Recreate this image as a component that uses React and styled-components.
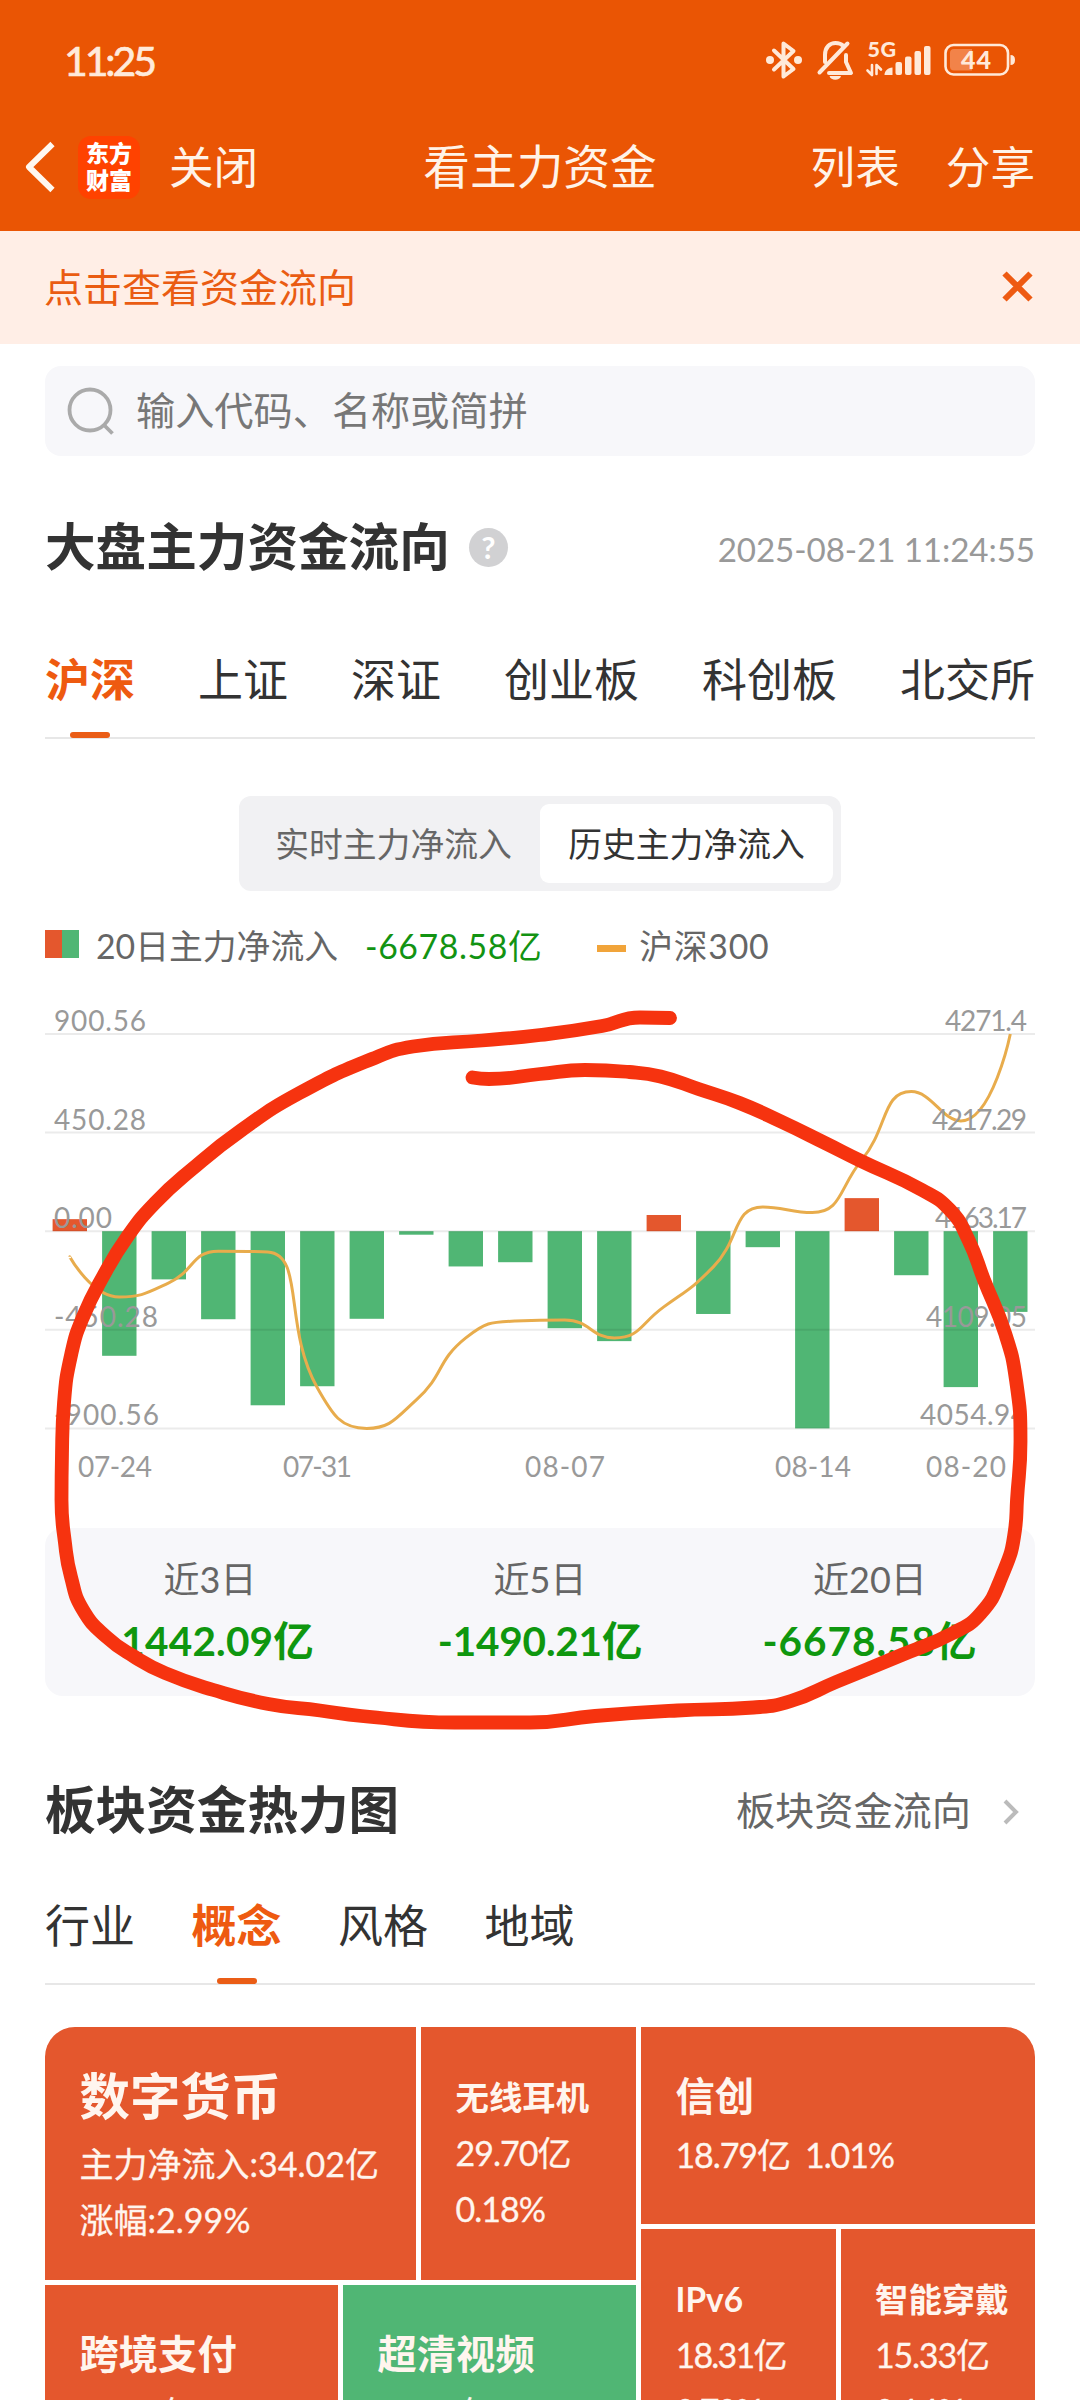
import React from "react";
import styled, { createGlobalStyle, css } from "styled-components";

const GlobalStyle = createGlobalStyle`
    *, *::before, *::after {
        box-sizing: border-box;
    }

    body {
        margin: 0;
        background: #fff;
        font-family: Lato, "Noto Sans CJK SC", sans-serif;
        color: #333;
    }
`;

const Page = styled.div`
    position: relative;
    width: 1080px;
    height: 2400px;
    overflow: hidden;
    background: #fff;
`;

const Header = styled.header`
    height: 231px;
    background: #ea5504;
    color: #fff3e8;
`;

const StatusBar = styled.div`
    display: flex;
    align-items: center;
    justify-content: space-between;
    height: 104px;
    padding: 16px 64px 0 64px;
`;

const Clock = styled.span`
    font-size: 41px;
    letter-spacing: -3.1px;
    color: #ffeadb;
    -webkit-text-stroke: 0.7px #ffeadb;
`;

const NavBar = styled.nav`
    display: grid;
    grid-template-columns: 1fr auto 1fr;
    align-items: center;
    height: 126px;
    padding: 0 45px;
    font-size: 44.6px;
    line-height: 60px;
`;

const NavSide = styled.div`
    display: flex;
    align-items: center;
    justify-content: ${props => (props.$end ? "flex-end" : "flex-start")};
    gap: ${props => (props.$end ? "46px" : "0")};
    margin-left: ${props => (props.$end ? "0" : "-20px")};
`;

const Title = styled.h1`
    margin: 0 0 2px;
    font-size: 46.7px;
    font-weight: 400;
`;

const AppLogo = styled.div`
    display: flex;
    flex-direction: column;
    align-items: center;
    justify-content: center;
    width: 62px;
    height: 63px;
    margin: 0 29px 0 22px;
    border-radius: 13px;
    background: #ff4200;
    color: #fff;
    font-size: 23px;
    font-weight: 900;
    line-height: 27px;
`;

const Notice = styled.div`
    display: flex;
    align-items: center;
    justify-content: space-between;
    height: 113px;
    padding: 0 47px 3px 44px;
    background: #ffeee6;
    color: #ea5c12;
    font-size: 39px;

    span {
        margin-bottom: 3px;
    }
`;

const Body = styled.main`
    padding: 0 45px;
`;

const SearchBox = styled.div`
    display: flex;
    align-items: center;
    gap: 20px;
    height: 90px;
    margin-top: 22px;
    padding: 0 0 2px 21px;
    border-radius: 16px;
    background: #f7f7fa;
    color: #777;
    font-size: 39.2px;

    span {
        margin-bottom: 4px;
    }
`;

const SectionHead = styled.div`
    display: flex;
    align-items: center;
    justify-content: space-between;
    height: 60px;
    margin-top: ${props => props.$top};
`;

const SectionTitle = styled.h2`
    display: flex;
    align-items: center;
    gap: 19px;
    margin: 0;
    font-size: 50.6px;
    font-weight: 700;
    line-height: 60px;
`;

const HelpDot = styled.span`
    width: 39px;
    height: 39px;
    border-radius: 50%;
    background: #d1d1d3;
    color: #fff;
    font-size: 31px;
    font-weight: 700;
    line-height: 39px;
    text-align: center;
`;

const Timestamp = styled.span`
    padding-top: 3px;
    color: #999;
    font-size: 33.2px;
    letter-spacing: -0.1px;
`;

const MoreLink = styled.a`
    display: flex;
    align-items: center;
    gap: 30px;
    padding-right: 16px;
    color: #666;
    font-size: 39.2px;

    span {
        margin-bottom: 5px;
    }

    svg {
        margin-top: 3px;
    }
`;

const Tabs = styled.div`
    display: flex;
    align-items: flex-end;
    justify-content: ${props => (props.$spread ? "space-between" : "flex-start")};
    gap: ${props => (props.$spread ? "0" : "56.5px")};
    height: ${props => props.$height};
    border-bottom: 2px solid #e7e7e7;
`;

const Tab = styled.div`
    position: relative;
    padding-bottom: 27px;
    font-size: 45px;
    line-height: 60px;

    ${props =>
        props.$active &&
        css`
            color: #ee5a10;
            font-weight: 700;

            &::after {
                content: "";
                position: absolute;
                bottom: -1px;
                left: calc(50% - 20px);
                width: 40px;
                height: 6px;
                border-radius: 3px;
                background: #ea5d16;
            }
        `}
`;

const Segmented = styled.div`
    display: grid;
    grid-template-columns: 293px 293px;
    width: 602px;
    height: 95px;
    margin: 57px 0 0 194px;
    padding: 8px;
    border-radius: 12px;
    background: #f1f1f3;
`;

const Segment = styled.div`
    display: flex;
    align-items: center;
    justify-content: center;
    padding-bottom: 2px;
    border-radius: 9px;
    background: ${props => (props.$active ? "#fff" : "transparent")};
    color: ${props => (props.$active ? "#333" : "#666")};
    font-size: 33.8px;
`;

const Legend = styled.div`
    display: flex;
    align-items: center;
    height: 40px;
    margin-top: 33px;
    margin-bottom: 1px;
    color: #666;
    font-size: 33.8px;
`;

const LegendBar = styled.span`
    width: 34px;
    height: 28px;
    margin-right: 17px;
    background: linear-gradient(90deg, #e4572d 50%, #50b674 50%);
`;

const LegendLine = styled.span`
    width: 29px;
    height: 7px;
    margin: 8px 13px 0 55px;
    background: #f1a43a;
`;

const LegendValue = styled.span`
    margin-left: 27px;
    color: #129312;
    letter-spacing: 0.6px;
`;

const LegendIndex = styled.span`
    letter-spacing: 0.7px;
`;

const ChartSvg = styled.svg`
    display: block;
    font-size: 28px;
    fill: #999;
`;

const Summary = styled.div`
    display: grid;
    grid-template-columns: repeat(3, 1fr);
    height: 168px;
    padding-top: 21px;
    border-radius: 18px;
    background: #f7f7fa;
    text-align: center;
`;

const SummaryLabel = styled.div`
    color: #666;
    font-size: 36px;
    line-height: 60px;
`;

const SummaryValue = styled.div`
    color: #0f970f;
    font-size: 40.5px;
    font-weight: 700;
    letter-spacing: ${props => props.$tracking}px;
    line-height: 63px;
`;

const HeatMap = styled.div`
    display: grid;
    grid-template-columns: 591px 394px;
    gap: 5px;
    height: 500px;
    margin-top: 42px;
    border-radius: 30px 30px 0 0;
    overflow: hidden;
`;

const HeatColumn = styled.div`
    display: grid;
    grid-template-rows: ${props => props.$first} 1fr;
    gap: 5px;
`;

const HeatRow = styled.div`
    display: grid;
    grid-template-columns: ${props => props.$columns};
    gap: 5px;
`;

const tileSizes = {
    lg: { font: 50.4, line: 62, pad: 38, space: 9 },
    md: { font: 39.3, line: 57, pad: 40, space: 3 },
    sm: { font: 33.4, line: 56, pad: 42, space: 0 },
};

const Tile = styled.div`
    padding: ${props => tileSizes[props.$size].pad}px 0 0 34.5px;
    background: ${props => (props.$down ? "#50b674" : "#e4572d")};
    color: #fff5ee;
    font-size: 34px;
    line-height: 56px;
    white-space: pre;
`;

const TileName = styled.div`
    margin-bottom: ${props => tileSizes[props.$size].space}px;
    font-size: ${props => tileSizes[props.$size].font}px;
    font-weight: 700;
    line-height: ${props => tileSizes[props.$size].line}px;
`;

const TileLine = styled.div`
    letter-spacing: ${props => props.$tracking}px;
    -webkit-text-stroke: 0.3px #fff5ee;
`;

const Marker = styled.svg`
    position: absolute;
    top: 0;
    left: 0;
    pointer-events: none;
`;

const StatusIcons = () => (
    <svg width="252" height="64" viewBox="764 28 252 64" fill="none" stroke="#ffe9d9" strokeLinecap="round" strokeLinejoin="round">
        <path d="M774 50.5 793.5 69 783.5 76.5V43.5L793.5 51 774 69.5" strokeWidth="4" />
        <circle cx="770" cy="60" r="4" fill="#ffe9d9" stroke="none" />
        <circle cx="798" cy="60" r="4" fill="#ffe9d9" stroke="none" />
        <path d="M825 62V55c0-8 5-12 10.500-12 3.500 0 6 1 8 3M819.500 72.500 847.500 43.500M846 55v7l5 11H829" strokeWidth="4" />
        <path d="M829.500 76h11.500c-1 5-10.500 5-11.500 0z" fill="#ffe9d9" stroke="none" />
        <text x="867.500" y="57" fontSize="21.500" fontWeight="900" fill="#ffe9d9" stroke="none" textLength="28.500">5G</text>
        <path d="M867.500 70.500 872 75V65M876.500 74V65l4.500 4.500" strokeWidth="2.600" />
        <path d="M884.500 75c0-4 3-7 8-7.500v7.500z" fill="#ffe9d9" stroke="none" />
        <g fill="#ffe9d9" stroke="none">
            <rect x="895.500" y="62" width="6.500" height="13" rx="2" />
            <rect x="905" y="56.500" width="6.500" height="18.500" rx="2" />
            <rect x="914.500" y="51" width="6.500" height="24" rx="2" />
            <rect x="924" y="46" width="6.500" height="29" rx="2" />
        </g>
        <rect x="945.500" y="45" width="62.500" height="29.500" rx="8" strokeWidth="2.600" />
        <path d="M954 49h18v21.500h-18c-2.500 0-4-1.500-4-4V53c0-2.500 1.500-4 4-4z" fill="#f28349" stroke="none" />
        <path d="M1010.500 55c3 0 4.500 1.500 4.500 5s-1.500 5-4.500 5z" fill="#ffe9d9" stroke="none" />
        <text x="961" y="69" fontSize="25" fontWeight="900" fill="#ffe9d9" stroke="none" textLength="30">44</text>
    </svg>
);

const BackIcon = () => (
    <svg width="31" height="52" viewBox="0 0 31 52" fill="none" stroke="#fff8f0" strokeWidth="6">
        <path d="M27.500 3 4 26 27.500 49" strokeLinejoin="round" />
    </svg>
);

const CloseIcon = () => (
    <svg width="31" height="31" viewBox="0 0 31 31" stroke="#ee5a12" strokeWidth="6">
        <path d="M2.500 2.500 28.500 28.500M28.500 2.500 2.500 28.500" />
    </svg>
);

const SearchIcon = () => (
    <svg width="50" height="50" viewBox="0 0 50 50" fill="none" stroke="#aaa" strokeWidth="3.800">
        <circle cx="24" cy="25" r="20.500" />
        <path d="M37.500 39.500 46.500 48.500" />
    </svg>
);

const ArrowIcon = () => (
    <svg width="18" height="28" viewBox="0 0 18 28" fill="none" stroke="#bbb" strokeWidth="4">
        <path d="M4 3 15 14 4 25" />
    </svg>
);

const flows = [
    55, -569, -220, -402, -795, -708, -400, -16, -161, -141.6, -443, -502, 74, -378, -73, -900.56, 151, -201, -712, -368.5,
];

const closes = [
    4149.1, 4127.1, 4134.8, 4152.2, 4151.8, 4077.2, 4054.94, 4070.6, 4104.6, 4113.9, 4114.5, 4104.6, 4121.6, 4143.6, 4176.5,
    4173.4, 4202.3, 4239.8, 4223.7, 4271.4,
];

const flowTicks = [["900.56", 90], ["450.28", 90], ["0.00", 56], ["-450.28", 102], ["-900.56", 103]];
const closeTicks = [["4271.4", 80], ["4217.29", 93], ["4163.17", 90], ["4109.05", 99], ["4054.94", 105]];
const dates = [["07-24", 33, 73], ["07-31", 238, 68], ["08-07", 480, 79], ["08-14", 730, 75], ["08-20", 881, 79]];

const TOP = 69;
const STEP = 98.6;
const ZERO = TOP + STEP * 2;
const xAt = i => 24.8 + i * 49.5;

const clamp = (value, a, b) => Math.min(Math.max(value, Math.min(a, b)), Math.max(a, b));

// Smooth curve whose control points never overshoot the neighbouring points
const smoothPath = points => {
    let d = `M${points[0].join(" ")}`;
    let out = points[0];
    for (let i = 1; i < points.length; i++) {
        const [p, prev, next] = [points[i], points[i - 1], points[i + 1]];
        let inn = p;
        let nextOut = p;
        if (next) {
            const lenPrev = Math.hypot(p[0] - prev[0], p[1] - prev[1]);
            const lenNext = Math.hypot(next[0] - p[0], next[1] - p[1]);
            const ratio = lenNext / (lenPrev + lenNext);
            const first = p.map((v, k) => clamp(v + (next[k] - prev[k]) * 0.5 * ratio, v, next[k]));
            inn = p.map((v, k) => clamp(v - ((first[k] - v) * lenPrev) / lenNext, v, prev[k]));
            nextOut = p.map((v, k) => v + ((v - inn[k]) * lenNext) / lenPrev);
        }
        d += `C${[...out, ...inn, ...p].map(v => v.toFixed(1)).join(" ")}`;
        out = nextOut;
    }
    return d;
};

const FlowChart = () => (
    <ChartSvg width="990" height="563" viewBox="0 0 990 563">
        {flows.map((value, i) => {
            const height = (Math.abs(value) / 450.28) * STEP;
            return (
                <rect
                    key={i}
                    x={xAt(i) - 17.2}
                    y={value > 0 ? ZERO - height : ZERO}
                    width="34.4"
                    height={height}
                    fill={value > 0 ? "#e4572d" : "#50b674"}
                />
            );
        })}
        {flowTicks.map((tick, i) => (
            <path key={i} d={`M0 ${TOP + STEP * i}H990`} stroke="#000" strokeOpacity="0.08" strokeWidth="2" />
        ))}
        <path
            d={smoothPath(closes.map((v, i) => [xAt(i), TOP + ((4271.4 - v) / 54.115) * STEP]))}
            fill="none"
            stroke="#e8ac4c"
            strokeWidth="3"
        />
        {flowTicks.map(([text, width], i) => (
            <text key={text} x="9" y={TOP - 3 + STEP * i} textLength={width + 2}>{text}</text>
        ))}
        {closeTicks.map(([text, width], i) => (
            <text key={text} x={980 - width} y={TOP - 3 + STEP * i} textLength={width + 2}>{text}</text>
        ))}
        {dates.map(([text, x, width]) => (
            <text key={text} x={x} y="511.5" textLength={width + 1}>{text}</text>
        ))}
    </ChartSvg>
);

const strokePoints = [
    [670, 1018], [640, 1017.5], [602, 1026], [540, 1035], [482, 1040.5], [413, 1046.5], [372, 1059], [299.5, 1093],
    [241, 1130.5], [191, 1170], [155, 1203], [127.5, 1236.5], [103, 1276.5], [83, 1317], [71.5, 1353], [64, 1403],
    [62, 1453], [61.5, 1500], [65, 1543], [71, 1577], [83, 1610], [106.5, 1637], [134, 1656.5], [165, 1673],
    [213.5, 1690], [268.5, 1704], [320, 1710.5], [361.5, 1716], [454.5, 1722.5], [530, 1722.5], [595, 1716],
    [677.5, 1710.5], [753.5, 1707.5], [791, 1701], [836, 1682], [901.5, 1655], [953, 1633], [981, 1613],
    [1001.5, 1577], [1015, 1530], [1017, 1500], [1020.5, 1441.5], [1016, 1380], [1005, 1333], [984, 1280],
    [968.5, 1240], [950, 1210], [922, 1190], [860, 1160.5], [826, 1143.5], [781, 1121.5], [739.5, 1103],
    [698.5, 1089], [660.5, 1076.5], [629.5, 1072], [585, 1070], [540, 1074], [489, 1079], [472.5, 1077.5],
];

const MarkerStroke = () => (
    <Marker width="1080" height="2400" viewBox="0 0 1080 2400">
        <path d={smoothPath(strokePoints)} fill="none" stroke="#f6330f" strokeWidth="13.8" strokeLinecap="round" />
    </Marker>
);

const HeatTile = ({ size = "sm", name, lines, down, tracking = 0 }) => (
    <Tile $size={size} $down={down}>
        <TileName $size={size}>{name}</TileName>
        {lines.map(line => (
            <TileLine key={line} $tracking={tracking}>{line}</TileLine>
        ))}
    </Tile>
);

const markets = ["沪深", "上证", "深证", "创业板", "科创板", "北交所"];
const boards = ["行业", "概念", "风格", "地域"];
const totals = [["近3日", "-1442.09亿", 0.2], ["近5日", "-1490.21亿", -0.2], ["近20日", "-6678.58亿", 1]];

export default function App() {
    return (
        <Page>
            <GlobalStyle />
            <Header>
                <StatusBar>
                    <Clock>11:25</Clock>
                    <StatusIcons />
                </StatusBar>
                <NavBar>
                    <NavSide>
                        <BackIcon />
                        <AppLogo>
                            <span>东方</span>
                            <span>财富</span>
                        </AppLogo>
                        <span>关闭</span>
                    </NavSide>
                    <Title>看主力资金</Title>
                    <NavSide $end>
                        <span>列表</span>
                        <span>分享</span>
                    </NavSide>
                </NavBar>
            </Header>
            <Notice>
                <span>点击查看资金流向</span>
                <CloseIcon />
            </Notice>
            <Body>
                <SearchBox>
                    <SearchIcon />
                    <span>输入代码、名称或简拼</span>
                </SearchBox>

                <SectionHead $top="61px">
                    <SectionTitle>
                        大盘主力资金流向
                        <HelpDot>?</HelpDot>
                    </SectionTitle>
                    <Timestamp>2025-08-21 11:24:55</Timestamp>
                </SectionHead>
                <Tabs $spread $height="162px">
                    {markets.map((name, i) => (
                        <Tab key={name} $active={i === 0}>{name}</Tab>
                    ))}
                </Tabs>
                <Segmented>
                    <Segment>实时主力净流入</Segment>
                    <Segment $active>历史主力净流入</Segment>
                </Segmented>
                <Legend>
                    <LegendBar />
                    <span>20日主力净流入</span>
                    <LegendValue>-6678.58亿</LegendValue>
                    <LegendLine />
                    <LegendIndex>沪深300</LegendIndex>
                </Legend>
                <FlowChart />
                <Summary>
                    {totals.map(([label, value, tracking]) => (
                        <div key={label}>
                            <SummaryLabel>{label}</SummaryLabel>
                            <SummaryValue $tracking={tracking}>{value}</SummaryValue>
                        </div>
                    ))}
                </Summary>

                <SectionHead $top="84px">
                    <SectionTitle>板块资金热力图</SectionTitle>
                    <MoreLink>
                        <span>板块资金流向</span>
                        <ArrowIcon />
                    </MoreLink>
                </SectionHead>
                <Tabs $height="145px">
                    {boards.map((name, i) => (
                        <Tab key={name} $active={i === 1}>{name}</Tab>
                    ))}
                </Tabs>
                <HeatMap>
                    <HeatColumn $first="253px">
                        <HeatRow $columns="371px 1fr">
                            <HeatTile size="lg" name="数字货币" lines={["主力净流入:34.02亿", "涨幅:2.99%"]} />
                            <HeatTile name="无线耳机" lines={["29.70亿", "0.18%"]} tracking={-1} />
                        </HeatRow>
                        <HeatRow $columns="1fr 1fr">
                            <HeatTile size="md" name="跨境支付" lines={["23.86亿", "2.05%"]} tracking={-1} />
                            <HeatTile size="md" name="超清视频" lines={["20.42亿", "-0.36%"]} tracking={-1} down />
                        </HeatRow>
                    </HeatColumn>
                    <HeatColumn $first="197px">
                        <HeatTile size="md" name="信创" lines={["18.79亿  1.01%"]} tracking={-1.1} />
                        <HeatRow $columns="1fr 1fr">
                            <HeatTile name="IPv6" lines={["18.31亿", "0.70%"]} tracking={-1.8} />
                            <HeatTile name="智能穿戴" lines={["15.33亿", "0.14%"]} tracking={-1.2} />
                        </HeatRow>
                    </HeatColumn>
                </HeatMap>
            </Body>
            <MarkerStroke />
        </Page>
    );
}
